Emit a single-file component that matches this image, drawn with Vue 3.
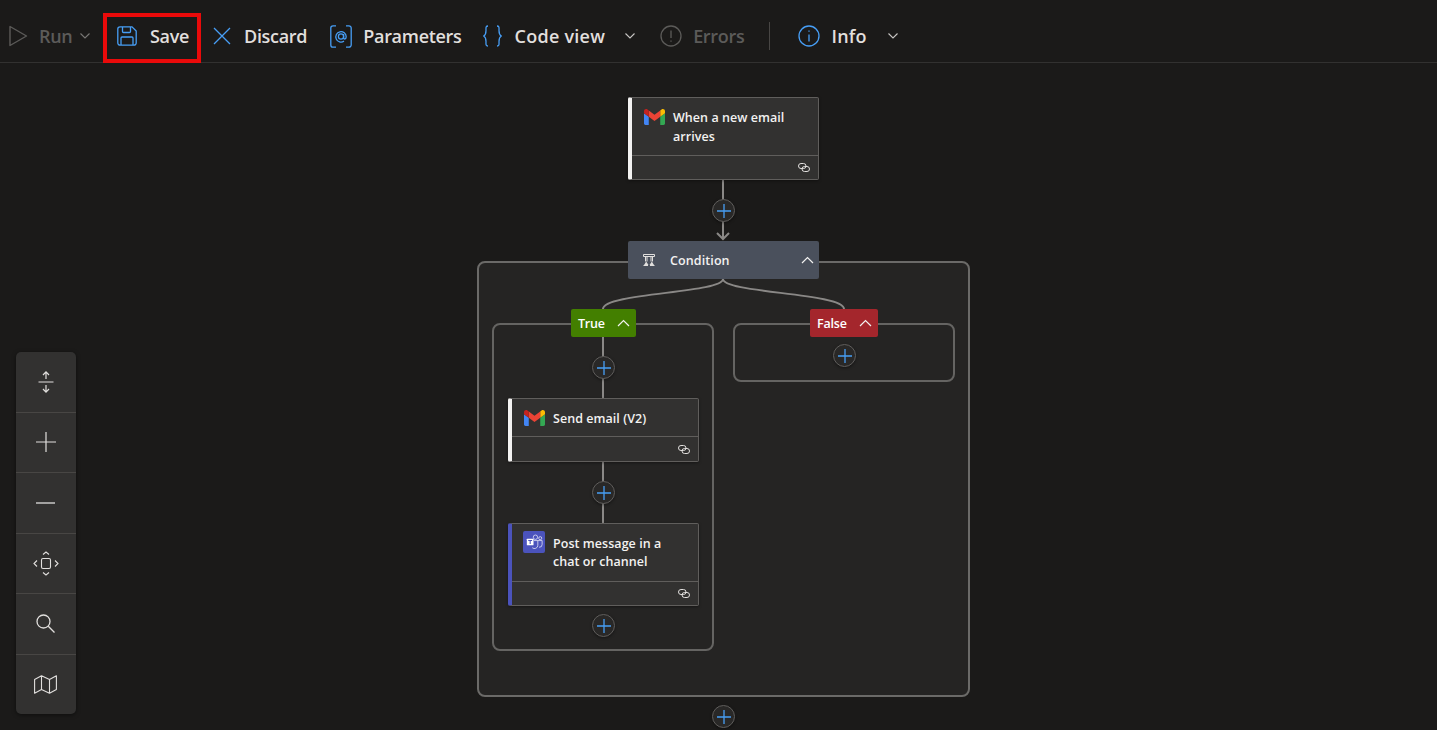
<script setup>
const cards = [
  { id: 'trigger', x: 628, y: 97, h: 83, head: 58, lines: ['When a new email', 'arrives'], icon: 'gmail', bar: '#f3f2f1' },
  { id: 'send', x: 508, y: 398, h: 64, head: 38, lines: ['Send email (V2)'], icon: 'gmail', bar: '#f3f2f1' },
  { id: 'post', x: 508, y: 523, h: 83, head: 58, lines: ['Post message in a', 'chat or channel'], icon: 'teams', bar: '#4b53bc' },
]

const plusButtons = [
  [723, 211],
  [603, 368],
  [844, 356],
  [603, 493],
  [603, 626],
  [723, 717],
]

const boxes = [
  { cls: 'scope', x: 477, y: 261, w: 493, h: 436 },
  { cls: 'branch', x: 492, y: 323, w: 222, h: 328 },
  { cls: 'branch', x: 733, y: 323, w: 222, h: 59 },
]

const at = (x, y) => ({ left: x + 'px', top: y + 'px' })
</script>

<template>
  <div class="page">
    <header class="toolbar">
      <div class="tb-item is-off run">
        <svg class="tb-icon" width="20" height="24" viewBox="0 0 20 24" fill="none" stroke="currentColor" stroke-width="1.4">
          <path d="M1 2.500v19L17.500 12z" stroke-linejoin="round" />
        </svg>
        <span class="tb-label">Run</span>
        <svg class="chev" width="12" height="8" viewBox="0 0 12 8" fill="none" stroke="currentColor" stroke-width="1.1"><path d="M1.5 1.5 6 6l4.5-4.5" /></svg>
      </div>

      <div class="tb-item save">
        <svg class="tb-icon blue" width="20" height="20" viewBox="0 0 20 20" fill="none" stroke="currentColor" stroke-width="1.3">
          <path d="M3 .8h12l4.2 4.2v12a2.2 2.2 0 0 1-2.2 2.2H3A2.2 2.2 0 0 1 .8 17V3A2.2 2.2 0 0 1 3 .8z" />
          <path d="M5.5 1v4.5a1 1 0 0 0 1 1h6a1 1 0 0 0 1-1V1M4 19v-7a1 1 0 0 1 1-1h10a1 1 0 0 1 1 1v7" />
        </svg>
        <span class="tb-label">Save</span>
      </div>

      <div class="tb-item discard">
        <svg class="tb-icon blue" width="18" height="18" viewBox="0 0 18 18" fill="none" stroke="currentColor" stroke-width="1.3"><path d="M1 1l16 16M17 1 1 17" /></svg>
        <span class="tb-label">Discard</span>
      </div>

      <div class="tb-item params">
        <svg class="tb-icon blue" width="22" height="23" viewBox="0 0 22 23" fill="none" stroke="currentColor" stroke-width="1.3">
          <path d="M6 .8H3A2.2 2.2 0 0 0 .8 3v17A2.2 2.2 0 0 0 3 22.2h3M16 .8h3A2.2 2.2 0 0 1 21.2 3v17a2.2 2.2 0 0 1-2.2 2.2h-3" />
          <circle cx="11" cy="11.5" r="2.6" />
          <path d="M13.6 9v3.6c0 2 2.6 2 2.6-.8a5.2 5.2 0 1 0-2.2 4.3" />
        </svg>
        <span class="tb-label">Parameters</span>
      </div>

      <div class="tb-item code">
        <svg class="tb-icon blue" width="19" height="22" viewBox="0 0 19 22" fill="none" stroke="currentColor" stroke-width="1.3">
          <path d="M5 1C2.5 1 3 3 3 5.500c0 3-.5 4.500-2.300 5.500C2.500 12 3 13.500 3 16.500 3 19 2.500 21 5 21M14 1c2.500 0 2 2 2 4.500 0 3 .5 4.500 2.300 5.500-1.800 1-2.300 2.500-2.300 5.500 0 2.500.5 4.500-2 4.500" />
        </svg>
        <span class="tb-label">Code view</span>
        <svg class="chev wide" width="12" height="8" viewBox="0 0 12 8" fill="none" stroke="currentColor" stroke-width="1.1"><path d="M1.500 1.500 6 6l4.500-4.500" /></svg>
      </div>

      <div class="tb-item is-off errors">
        <svg class="tb-icon" width="22" height="22" viewBox="0 0 22 22" fill="none" stroke="currentColor" stroke-width="1.3">
          <circle cx="11" cy="11" r="10" />
          <path d="M11 5.500v7.500M11 15.500v1.300" />
        </svg>
        <span class="tb-label">Errors</span>
      </div>

      <div class="tb-divider" />

      <div class="tb-item info">
        <svg class="tb-icon blue" width="22" height="22" viewBox="0 0 22 22" fill="none" stroke="currentColor" stroke-width="1.3">
          <circle cx="11" cy="11" r="10" />
          <path d="M11 9.500v7M11 5.500v1.300" />
        </svg>
        <span class="tb-label">Info</span>
        <svg class="chev wide" width="12" height="8" viewBox="0 0 12 8" fill="none" stroke="currentColor" stroke-width="1.1"><path d="M1.500 1.500 6 6l4.500-4.500" /></svg>
      </div>
    </header>

    <main class="canvas">
      <!-- canvas coordinates are page coordinates, canvas starts at y=63 -->
      <div class="flow">
        <div v-for="(b, i) in boxes" :key="i" :class="b.cls"
          :style="{ ...at(b.x, b.y), width: b.w + 'px', height: b.h + 'px' }" />

        <svg class="edges" width="1437" height="730" fill="none" stroke="#8a8886" stroke-width="2">
          <path d="M723 180v58M717 233l6 6 6-6" />
          <path d="M723 279c0 14-120 14-120 30M723 279c0 14 121 14 121 30" />
          <path d="M603 337v61M603 462v61" />
        </svg>

        <div v-for="c in cards" :key="c.id" class="card" :class="'card-' + c.id"
          :style="{ ...at(c.x, c.y), height: c.h + 'px', borderLeftColor: c.bar }">
          <div class="card-head" :style="{ height: c.head + 'px' }">
            <svg v-if="c.icon === 'gmail'" class="card-icon" width="21" height="16" viewBox="52 42 88 66">
              <path fill="#4285f4" d="M58 108h14V74L52 59v43c0 3.320 2.690 6 6 6" />
              <path fill="#34a853" d="M120 108h14c3.320 0 6-2.690 6-6V59l-20 15" />
              <path fill="#fbbc04" d="M120 48v26l20-15v-8c0-7.420-8.470-11.650-14.400-7.200" />
              <path fill="#ea4335" d="M72 74V48l24 18 24-18v26L96 92" />
              <path fill="#c5221f" d="M52 51v8l20 15V48l-5.600-4.200c-5.940-4.450-14.400-.22-14.400 7.200" />
            </svg>
            <svg v-else class="card-icon teams" width="23" height="23" viewBox="0 0 23 23">
              <rect width="23" height="23" rx="2" fill="#4b53bc" />
              <circle cx="13" cy="6.500" r="2.300" fill="none" stroke="#e8e8f6" stroke-width=".8" />
              <circle cx="18" cy="7.500" r="1.600" fill="none" stroke="#e8e8f6" stroke-width=".8" />
              <path d="M11.500 10h8.500v4a3 3 0 0 1-3.200 3M15.500 10v5a3.500 3.500 0 0 1-5.800 2.500" fill="none" stroke="#e8e8f6" stroke-width=".8" />
              <rect x="4" y="8" width="7" height="7" rx=".6" fill="#fff" />
              <path d="M5.500 9.900h4M7.500 9.900v3.700" stroke="#4b53bc" stroke-width="1.100" />
            </svg>
            <div class="card-title">
              <div v-for="line in c.lines" :key="line">{{ line }}</div>
            </div>
          </div>
          <div class="card-foot">
            <svg width="12" height="9" viewBox="0 0 12 9" fill="none" stroke="#e1dfdd" stroke-width="1">
              <rect x=".5" y=".5" width="7.500" height="5" rx="2.500" />
              <rect x="4" y="3.500" width="7.500" height="5" rx="2.500" />
            </svg>
          </div>
        </div>

        <div class="condition" :style="at(628, 241)">
          <svg class="cond-icon" width="12" height="12" viewBox="0 0 12 12" fill="none" stroke="#e1dfdd" stroke-width="1">
            <path d="M.5.500h11v2H.5zM2.500 2.500v5M4 2.500v5M8 2.500v5M9.500 2.500v5M.5 11.500h4.500M7 11.500h4.500" />
            <path d="M3.200 7.500 1 11h4.500zM8.800 7.500 6.500 11H11z" fill="#e1dfdd" stroke="none" />
          </svg>
          <span class="cond-label">Condition</span>
          <svg class="cond-chev" width="13" height="8" viewBox="0 0 13 8" fill="none" stroke="#f3f2f1" stroke-width="1.200"><path d="M1 7l5.500-5.500L12 7" /></svg>
        </div>

        <div class="badge is-true" :style="at(571, 309)">
          <span>True</span>
          <svg width="13" height="8" viewBox="0 0 13 8" fill="none" stroke="#f3f2f1" stroke-width="1.200"><path d="M1 7l5.500-5.500L12 7" /></svg>
        </div>
        <div class="badge is-false" :style="at(810, 309)">
          <span>False</span>
          <svg width="13" height="8" viewBox="0 0 13 8" fill="none" stroke="#f3f2f1" stroke-width="1.200"><path d="M1 7l5.500-5.500L12 7" /></svg>
        </div>

        <button v-for="p in plusButtons" :key="p.join()" class="plus" :style="at(p[0] - 11, p[1] - 12)">
          <svg width="14" height="14" viewBox="0 0 14 14" stroke="#479ef5" stroke-width="1.300"><path d="M7 0v14M0 7h14" /></svg>
        </button>
      </div>

      <aside class="controls">
        <div class="ctl">
          <svg width="16" height="24" viewBox="0 0 16 24" fill="none" stroke="#e1dfdd" stroke-width="1.200">
            <path d="M.5 12h15M8 2v7M5 5l3-3.200L11 5M8 15v7M5 19l3 3.200 3-3.200" />
          </svg>
        </div>
        <div class="ctl">
          <svg width="20" height="20" viewBox="0 0 20 20" stroke="#e1dfdd" stroke-width="1.200"><path d="M10 0v20M0 10h20" /></svg>
        </div>
        <div class="ctl">
          <svg width="19" height="2" viewBox="0 0 19 2" stroke="#e1dfdd" stroke-width="1.300"><path d="M0 1h19" /></svg>
        </div>
        <div class="ctl">
          <svg width="26" height="25" viewBox="0 0 26 25" fill="none" stroke="#e1dfdd" stroke-width="1.100">
            <rect x="8.500" y="7.500" width="9" height="10" rx="1.500" />
            <path d="M10 3.500 13 1l3 2.500M10 21.500l3 2.500 3-2.500M4 9.500 1 12.500l3 3M22 9.500l3 3-3 3" />
          </svg>
        </div>
        <div class="ctl">
          <svg width="19" height="19" viewBox="0 0 19 19" fill="none" stroke="#e1dfdd" stroke-width="1.300">
            <circle cx="7.500" cy="7.500" r="6.500" /><path d="M12.300 12.300 18.500 18.500" />
          </svg>
        </div>
        <div class="ctl">
          <svg width="23" height="19" viewBox="0 0 23 19" fill="none" stroke="#e1dfdd" stroke-width="1.100">
            <path d="M.6 4.500 7.500.8l8 3.700 6.900-3.700v13.700l-6.900 3.700-8-3.700L.6 18.200zM7.500.8v13.700M15.500 4.500v13.700" stroke-linejoin="round" />
          </svg>
        </div>
      </aside>
    </main>
  </div>
</template>

<style>
html, body {
  margin: 0;
  background: #1b1a19;
}
</style>

<style scoped>
.page {
  width: 1437px;
  height: 730px;
  overflow: hidden;
  display: flex;
  flex-direction: column;
  background: #1b1a19;
  font-family: "Open Sans", "Noto Sans", sans-serif;
  color: #e1dfdd;
}

.toolbar {
  height: 52px;
  flex: none;
  display: flex;
  align-items: center;
  border-bottom: 1px solid #323130;
  padding: 10px 0 0 9px;
  box-sizing: content-box;
}

.tb-item {
  display: flex;
  align-items: center;
  height: 32px;
}

.tb-label {
  font-size: 18px;
  font-weight: 600;
  letter-spacing: -0.3px;
  white-space: nowrap;
}

.tb-icon.blue {
  color: #479ef5;
}

.is-off {
  color: #5c5b59;
}

.chev {
  color: #797775;
  margin-left: 7px;
}

.chev.wide {
  color: #c8c6c4;
}

.run {
  width: 94px;
}

.run .tb-label {
  margin-left: 10px;
}

.save {
  box-sizing: border-box;
  width: 98px;
  height: 50px;
  align-self: flex-end;
  margin-bottom: -1px;
  border: 4px solid #ea0a0a;
  padding: 0 0 4px 10px;
}

.save .tb-label {
  margin-left: 13px;
}

.discard {
  margin-left: 12px;
}

.discard .tb-label {
  margin-left: 13px;
}

.params {
  margin-left: 23px;
}

.params .tb-label {
  margin-left: 11px;
}

.code {
  margin-left: 21px;
}

.code .tb-label {
  margin-left: 13px;
  letter-spacing: 0.25px;
}

.code .chev {
  margin-left: 19px;
}

.errors {
  margin-left: 24px;
}

.errors .tb-label {
  margin-left: 11px;
}

.tb-divider {
  width: 1px;
  height: 28px;
  background: #484644;
  margin-left: 25px;
  margin-right: 28px;
}

.info .tb-label {
  margin-left: 11px;
  letter-spacing: 0.2px;
}

.info .chev {
  margin-left: 20px;
}

.canvas {
  flex: 1;
  position: relative;
}

/* diagram layer uses page coordinates */
.flow {
  position: absolute;
  left: 0;
  top: -63px;
  width: 1437px;
  height: 730px;
}

.edges {
  position: absolute;
  left: 0;
  top: 0;
}

.scope,
.branch {
  position: absolute;
  box-sizing: border-box;
  border: 2px solid #656462;
  border-radius: 8px;
  background: #252423;
}

.scope {
  border-color: #6b6a68;
}

.card {
  position: absolute;
  box-sizing: border-box;
  width: 191px;
  display: flex;
  flex-direction: column;
  background: #323130;
  border: 1px solid #605e5c;
  border-left: 4px solid #f3f2f1;
  border-radius: 2px;
  box-shadow: 0 1px 3px rgba(0, 0, 0, 0.4);
}

.card-head {
  box-sizing: border-box;
  flex: none;
  display: flex;
  align-items: flex-start;
  gap: 8px;
  padding: 10px 8px 0 12px;
  border-bottom: 1px solid #605e5c;
}

.card-icon {
  flex: none;
  margin-top: 1px;
}

.card-icon.teams {
  width: 22px;
  height: 22px;
  margin: -3px 0 0 -1px;
}

.card-title {
  font-size: 12.500px;
  font-weight: 600;
  line-height: 18.500px;
  letter-spacing: 0.05px;
  color: #f3f2f1;
  white-space: nowrap;
  margin-top: 1px;
}

.card-post .card-title {
  line-height: 18px;
}

.card-foot {
  flex: 1;
  display: flex;
  align-items: center;
  justify-content: flex-end;
  padding-right: 8px;
}

.condition {
  position: absolute;
  box-sizing: border-box;
  width: 191px;
  height: 38px;
  display: flex;
  align-items: center;
  padding: 0 5px 0 15px;
  background: #4a505c;
  border-radius: 2px;
  color: #f3f2f1;
}

.cond-label {
  font-size: 12.500px;
  font-weight: 600;
  letter-spacing: 0.1px;
  margin-left: 15px;
}

.cond-chev {
  margin-left: auto;
}

.badge {
  position: absolute;
  box-sizing: border-box;
  height: 28px;
  display: flex;
  align-items: center;
  justify-content: space-between;
  padding: 0 6px 0 7px;
  border-radius: 2px;
  font-size: 12.500px;
  font-weight: 600;
  letter-spacing: -0.2px;
  color: #fff;
}

.is-true {
  width: 65px;
  background: #437f00;
}

.is-false {
  width: 68px;
  background: #a4262c;
}

.plus {
  position: absolute;
  box-sizing: border-box;
  width: 23px;
  height: 23px;
  padding: 0;
  display: flex;
  align-items: center;
  justify-content: center;
  background: #292827;
  border: 1px solid #605e5c;
  border-radius: 50%;
  box-shadow: 0 1px 3px rgba(0, 0, 0, 0.4);
}

.controls {
  position: absolute;
  left: 16px;
  top: 289px;
  width: 60px;
  height: 362px;
  display: flex;
  flex-direction: column;
  background: #323130;
  border-radius: 5px;
  box-shadow: 0 1px 4px rgba(0, 0, 0, 0.5);
}

.ctl {
  flex: 1;
  display: flex;
  align-items: center;
  justify-content: center;
  padding-right: 1px;
  border-bottom: 1px solid #484644;
}

.ctl:last-child {
  border-bottom: none;
}
</style>
